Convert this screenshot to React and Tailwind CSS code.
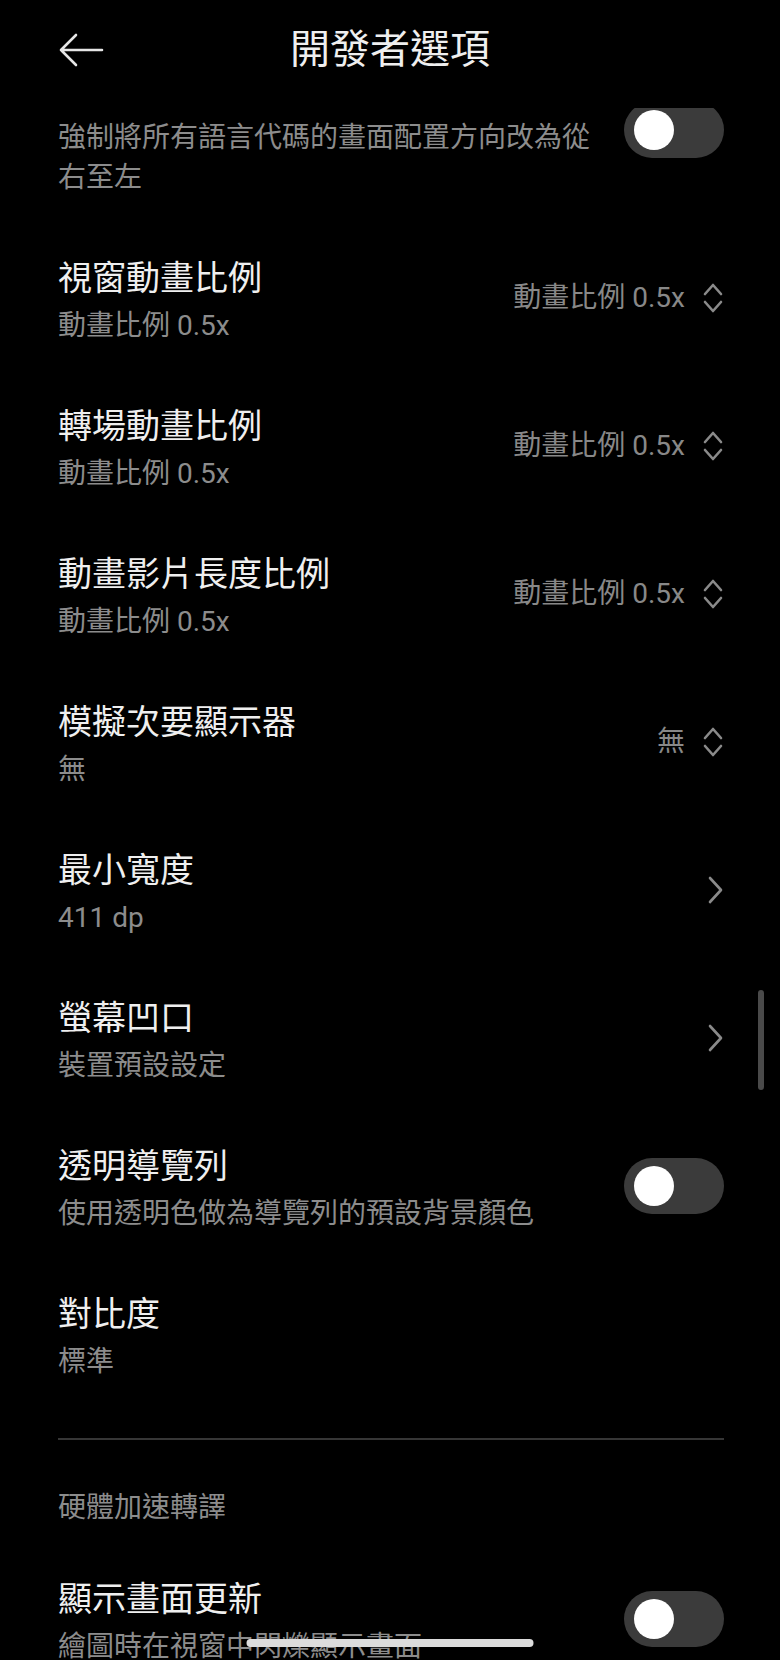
import React from "react";

const font = { fontFamily: 'Roboto, "Noto Sans CJK TC", sans-serif' };

const BackArrow = () => (
    <svg width="46" height="34" viewBox="0 0 46 34" fill="none">
        <path d="M44 17 H3 M18 2 L3 17 L18 32" stroke="#e6e6e6" strokeWidth="2.6" strokeLinecap="round" strokeLinejoin="round" />
    </svg>
);

const UpDown = () => (
    <svg width="22" height="34" viewBox="0 0 22 34" fill="none">
        <path d="M3 13 L11 4 L19 13 M3 21 L11 30 L19 21" stroke="#8a8a8a" strokeWidth="2.6" strokeLinecap="round" strokeLinejoin="round" />
    </svg>
);

const ChevronRight = () => (
    <svg width="18" height="30" viewBox="0 0 18 30" fill="none">
        <path d="M4 3 L15 15 L4 27" stroke="#8a8a8a" strokeWidth="2.6" strokeLinecap="round" strokeLinejoin="round" />
    </svg>
);

const Toggle = () => (
    <div className="w-[100px] h-[56px] rounded-full bg-[#3b3b3b] flex items-center pl-[10px] shrink-0">
        <div className="w-[40px] h-[40px] rounded-full bg-white" />
    </div>
);

const Row = ({ title, sub, right }) => (
    <div className="flex items-center justify-between py-[26px]">
        <div className="max-w-[540px]">
            <div className="text-[34px] leading-[56px] text-[#efefef]">{title}</div>
            <div className="text-[28px] leading-[40px] text-[#8c8c8c]">{sub}</div>
        </div>
        {right}
    </div>
);

const Value = ({ text }) => (
    <div className="flex items-center gap-[17px] shrink-0">
        <span className="text-[28px] leading-[40px] text-[#888888]">{text}</span>
        <UpDown />
    </div>
);

export default function App() {
    return (
        <div className="relative h-[1660px] w-[780px] overflow-hidden bg-black flex flex-col" style={font}>
            {/* Header */}
            <div className="h-[108px] shrink-0 pt-[25px] relative z-10 bg-black">
                <div className="grid grid-cols-[1fr_auto_1fr] items-center h-[50px]">
                    <div className="pl-[58px] flex items-center">
                        <BackArrow />
                    </div>
                    <div className="text-[40px] leading-[50px] text-[#efefef]">開發者選項</div>
                    <div />
                </div>
            </div>

            {/* Scrolled list */}
            <div className="flex-1 overflow-hidden">
                <div className="mt-[-72px] pl-[58px] pr-[56px]">
                    <Row title="強制使用從右至左版面配置方向" sub="強制將所有語言代碼的畫面配置方向改為從右至左" right={<Toggle />} />
                    <Row title="視窗動畫比例" sub="動畫比例 0.5x" right={<Value text="動畫比例 0.5x" />} />
                    <Row title="轉場動畫比例" sub="動畫比例 0.5x" right={<Value text="動畫比例 0.5x" />} />
                    <Row title="動畫影片長度比例" sub="動畫比例 0.5x" right={<Value text="動畫比例 0.5x" />} />
                    <Row title="模擬次要顯示器" sub="無" right={<Value text="無" />} />
                    <Row title="最小寬度" sub="411 dp" right={<ChevronRight />} />
                    <Row title="螢幕凹口" sub="裝置預設設定" right={<ChevronRight />} />
                    <Row title="透明導覽列" sub="使用透明色做為導覽列的預設背景顏色" right={<Toggle />} />
                    <Row title="對比度" sub="標準" right={null} />

                    <div className="mt-[30px] border-t-2 border-[#363636]" />

                    <div className="pt-[48px] pb-[17px] text-[28px] leading-[40px] text-[#8c8c8c]">硬體加速轉譯</div>

                    <Row title="顯示畫面更新" sub="繪圖時在視窗中閃爍顯示畫面" right={<Toggle />} />
                </div>
            </div>

            {/* Scrollbar */}
            <div className="absolute right-[16px] top-[990px] w-[6px] h-[100px] rounded-full bg-[#4a4a4a]" />

            {/* Gesture bar */}
            <div className="absolute bottom-[13px] left-1/2 -translate-x-1/2 w-[287px] h-[8px] rounded-full bg-[#dcdcdc]" />
        </div>
    );
}
